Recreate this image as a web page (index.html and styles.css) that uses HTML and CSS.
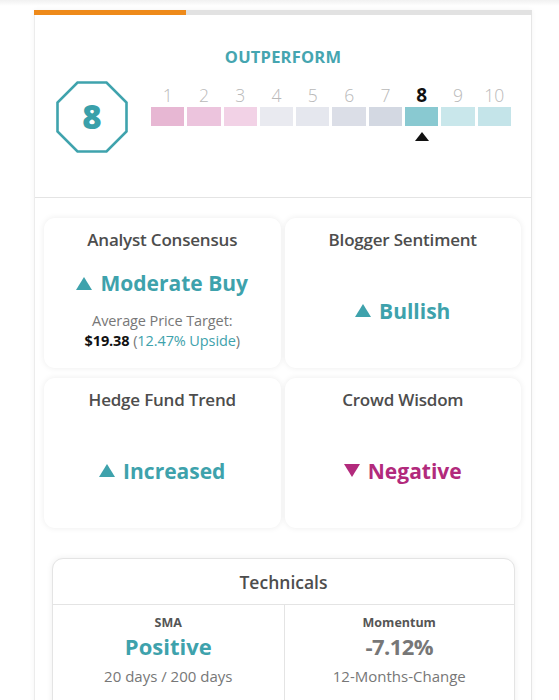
FILE: index.html
```html
<!DOCTYPE html>
<html lang="en">
<head>
<meta charset="utf-8">
<title>Smart Score</title>
<link rel="stylesheet" href="styles.css">
</head>
<body>
<div class="topshade"></div>
<div class="page">
  <div class="panel">
    <div class="progress"><div class="progress-fill"></div></div>
    <section class="score">
      <div class="verdict">OUTPERFORM</div>
      <div class="rating">
        <div class="octagon">
          <svg width="72" height="72" viewBox="0 0 72 72" aria-hidden="true">
            <polygon points="21.5,1.5 50.5,1.5 70.5,21.5 70.5,50.5 50.5,70.5 21.5,70.5 1.5,50.5 1.5,21.5" fill="none" stroke="#3fa3ad" stroke-width="2.6" stroke-linejoin="miter"/>
          </svg>
          <span class="octagon-num">8</span>
        </div>
        <div class="scale">
          <div class="scale-nums">
            <span>1</span><span>2</span><span>3</span><span>4</span><span>5</span><span>6</span><span>7</span><span class="active">8</span><span>9</span><span>10</span>
          </div>
          <div class="scale-bars">
            <span class="b1"></span><span class="b2"></span><span class="b3"></span><span class="b4"></span><span class="b5"></span><span class="b6"></span><span class="b7"></span><span class="b8"></span><span class="b9"></span><span class="b10"></span>
          </div>
          <div class="scale-marks">
            <span></span><span></span><span></span><span></span><span></span><span></span><span></span><span class="marker"></span><span></span><span></span>
          </div>
        </div>
      </div>
    </section>

    <section class="cards">
      <div class="card">
        <div class="card-title">Analyst Consensus</div>
        <div class="card-body top">
          <div class="value up"><span class="tri up-tri"></span>Moderate Buy</div>
          <div class="sub">Average Price Target:</div>
          <div class="sub2"><b>$19.38</b> (<span class="teal">12.47% Upside</span>)</div>
        </div>
      </div>
      <div class="card">
        <div class="card-title">Blogger Sentiment</div>
        <div class="card-body">
          <div class="value up"><span class="tri up-tri"></span>Bullish</div>
        </div>
      </div>
      <div class="card">
        <div class="card-title">Hedge Fund Trend</div>
        <div class="card-body">
          <div class="value up"><span class="tri up-tri"></span>Increased</div>
        </div>
      </div>
      <div class="card">
        <div class="card-title">Crowd Wisdom</div>
        <div class="card-body">
          <div class="value down"><span class="tri down-tri"></span>Negative</div>
        </div>
      </div>
    </section>

    <section class="tech-wrap">
      <div class="tech">
        <div class="tech-head">Technicals</div>
        <div class="tech-cols">
          <div class="tech-col">
            <div class="tech-label">SMA</div>
            <div class="tech-value teal">Positive</div>
            <div class="tech-sub">20 days / 200 days</div>
          </div>
          <div class="tech-col">
            <div class="tech-label">Momentum</div>
            <div class="tech-value gray">-7.12%</div>
            <div class="tech-sub">12-Months-Change</div>
          </div>
        </div>
      </div>
    </section>
  </div>
</div>
</body>
</html>
```
FILE: styles.css
```css
* { box-sizing: border-box; }
html, body { margin: 0; padding: 0; background: #ffffff; }
body {
  font-family: "Open Sans", "Liberation Sans", Arial, sans-serif;
  color: #4a4a4a;
  height: 700px;
  overflow: hidden;
  position: relative;
}
.topshade {
  position: absolute;
  left: 0; right: 0; top: 0;
  height: 6px;
  background: linear-gradient(#f1f1f1, #ffffff);
}
.page {
  padding: 10px 0 0 34px;
  position: relative;
}
.panel {
  width: 498px;
  height: 720px;
  border-left: 1px solid #ececec;
  border-right: 1px solid #e6e6e6;
  box-shadow: 0 0 5px rgba(0,0,0,0.05);
  background: #fff;
}
.progress {
  height: 5px;
  background: #e2e2e2;
  margin: 0 -1px;
}
.progress-fill {
  width: 152px;
  height: 5px;
  background: #ee8a1a;
}
.score {
  height: 183px;
  border-bottom: 1px solid #e4e4e4;
  padding-top: 32px;
}
.verdict {
  text-align: center;
  color: #45a5b0;
  font-weight: 700;
  font-size: 16.5px;
  line-height: 20px;
  letter-spacing: 0.2px;
}
.rating {
  display: flex;
  align-items: flex-start;
  padding-left: 21px;
  margin-top: 14px;
}
.octagon {
  position: relative;
  width: 72px;
  height: 72px;
  flex: none;
}
.octagon svg { display: block; }
.octagon-num {
  position: absolute;
  inset: 0;
  display: flex;
  align-items: center;
  justify-content: center;
  color: #3aa0aa;
  font-weight: 800;
  font-size: 33px;
  line-height: 1;
  padding-bottom: 2px;
}
.scale {
  margin-left: 23px;
  width: 360px;
  padding-top: 4px;
}
.scale-nums, .scale-bars, .scale-marks {
  display: grid;
  grid-template-columns: repeat(10, 1fr);
  column-gap: 3px;
}
.scale-nums span {
  text-align: center;
  font-size: 17.5px;
  line-height: 20px;
  font-weight: 300;
  color: #b9b9b9;
}
.scale-nums span.active {
  color: #111;
  font-weight: 700;
  font-size: 19px;
}
.scale-bars { margin-top: 2px; }
.scale-bars span { height: 19px; display: block; }
.b1 { background: #e7b7d3; }
.b2 { background: #ecc4dd; }
.b3 { background: #f2d2e6; }
.b4 { background: #e9eaf0; }
.b5 { background: #e5e7ee; }
.b6 { background: #dbdee7; }
.b7 { background: #d3d8e2; }
.b8 { background: #89c9d1; }
.b9 { background: #c9e7eb; }
.b10 { background: #c4e4e9; }
.scale-marks { margin-top: 6px; height: 10px; }
.scale-marks .marker {
  justify-self: center;
  width: 0; height: 0;
  border-left: 7px solid transparent;
  border-right: 7px solid transparent;
  border-bottom: 9px solid #111;
}

.cards {
  display: grid;
  grid-template-columns: 1fr 1fr;
  column-gap: 4px;
  row-gap: 10px;
  padding: 20px 10px 0 9px;
}
.card {
  height: 150px;
  border-radius: 11px;
  background: #fff;
  box-shadow: 0 0 6px rgba(0,0,0,0.08);
  display: flex;
  flex-direction: column;
  align-items: center;
  padding-top: 11px;
}
.card-title {
  font-size: 17px;
  font-weight: 600;
  color: #4d4d4d;
  line-height: 22px;
  letter-spacing: -0.2px;
}
.card-body {
  flex: 1;
  display: flex;
  flex-direction: column;
  align-items: center;
  justify-content: center;
  padding-top: 2px;
}
.card-body.top {
  justify-content: flex-start;
  padding-top: 19px;
}
.value {
  font-size: 21px;
  font-weight: 700;
  line-height: 26px;
  display: flex;
  align-items: center;
}
.value.up { color: #3ea2ac; }
.value.down { color: #b22a7c; }
.tri {
  width: 0; height: 0;
  margin-right: 8px;
  border-left: 8px solid transparent;
  border-right: 8px solid transparent;
}
.up-tri { border-bottom: 13px solid #3ea2ac; }
.down-tri { border-top: 13px solid #b22a7c; }
.sub {
  margin-top: 16px;
  font-size: 14.5px;
  line-height: 18px;
  color: #777;
  letter-spacing: -0.1px;
}
.sub2 {
  margin-top: 1px;
  font-size: 14.5px;
  line-height: 19px;
  color: #777;
  letter-spacing: -0.1px;
}
.sub2 b { color: #111; font-weight: 700; }
.teal { color: #3ea2ac; }

.tech-wrap { padding: 30px 16px 0 17px; }
.tech {
  border: 1px solid #e4e4e4;
  border-radius: 11px;
  box-shadow: 0 0 6px rgba(0,0,0,0.07);
  height: 160px;
  background: #fff;
}
.tech-head {
  height: 46px;
  border-bottom: 1px solid #e4e4e4;
  display: flex;
  align-items: center;
  justify-content: center;
  font-size: 17.5px;
  font-weight: 600;
  color: #4d4d4d;
}
.tech-cols {
  display: grid;
  grid-template-columns: 1fr 1fr;
  height: 113px;
}
.tech-col {
  display: flex;
  flex-direction: column;
  align-items: center;
  padding-top: 9px;
}
.tech-col + .tech-col { border-left: 1px solid #e4e4e4; }
.tech-label {
  font-size: 12.5px;
  font-weight: 700;
  color: #555;
  line-height: 18px;
}
.tech-value {
  font-size: 22px;
  font-weight: 700;
  line-height: 28px;
}
.tech-value.teal { color: #3ea2ac; }
.tech-value.gray { color: #777; letter-spacing: -0.6px; }
.tech-sub {
  margin-top: 7px;
  font-size: 15px;
  color: #777;
  line-height: 18px;
}
```
